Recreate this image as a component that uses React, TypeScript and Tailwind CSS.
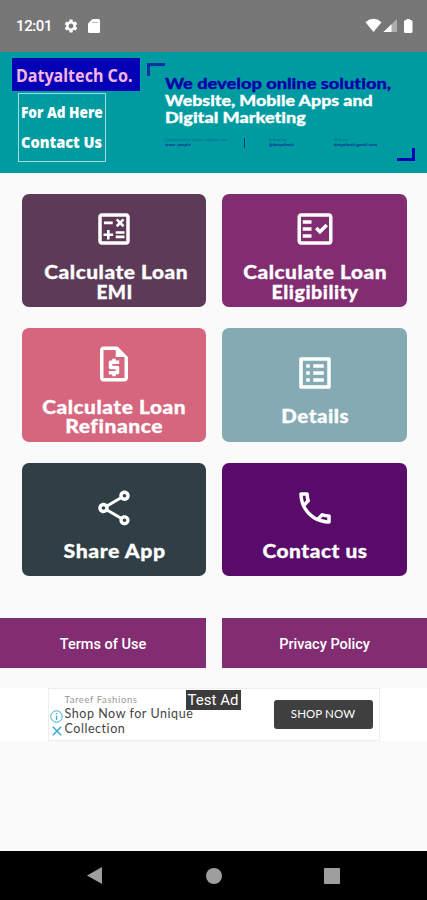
import type { ReactNode } from "react";
import clsx from "clsx";
import type { IconType } from "react-icons";
import {
  MdOutlineCalculate,
  MdOutlineCall,
  MdOutlineFactCheck,
  MdOutlineListAlt,
  MdOutlineRequestQuote,
  MdOutlineShare,
  MdSettings,
} from "react-icons/md";

type Tile = {
  lines: { text: string; className: string }[];
  icon: IconType;
  color: string;
};

const TILES: Tile[] = [
  {
    lines: [
      { text: "Calculate Loan", className: "scale-x-[1.07]" },
      { text: "EMI", className: "scale-x-[0.98] pr-1" },
    ],
    icon: MdOutlineCalculate,
    color: "bg-[#5d3b58]",
  },
  {
    lines: [
      { text: "Calculate Loan", className: "scale-x-[1.07] pr-1" },
      { text: "Eligibility", className: "scale-x-[1.01] pr-1" },
    ],
    icon: MdOutlineFactCheck,
    color: "bg-[#822c71]",
  },
  {
    lines: [
      { text: "Calculate Loan", className: "scale-x-[1.07] pr-1" },
      { text: "Refinance", className: "scale-x-[1.08] pr-1" },
    ],
    icon: MdOutlineRequestQuote,
    color: "bg-[#d5667e]",
  },
  {
    lines: [{ text: "Details", className: "scale-x-[1.05] pr-1" }],
    icon: MdOutlineListAlt,
    color: "bg-[#84abb4]",
  },
  {
    lines: [{ text: "Share App", className: "scale-x-[1.09] pr-1" }],
    icon: MdOutlineShare,
    color: "bg-[#2f3f45]",
  },
  {
    lines: [{ text: "Contact us", className: "scale-x-[1.07] pr-1" }],
    icon: MdOutlineCall,
    color: "bg-[#590b69]",
  },
];

function StatusBar() {
  return (
    <header className="flex h-[52px] items-center bg-[#777777] pl-4 text-white">
      <span className="w-[47px] pt-px font-['Roboto'] text-[15px] font-medium tracking-[-0.4px]">
        12:01
      </span>
      <MdSettings size={16} />
      <svg className="ml-[9px]" width="12" height="14" viewBox="0 0 12 14">
        <path
          d="M4.5 0H10.5Q12 0 12 1.5V12.5Q12 14 10.5 14H1.5Q0 14 0 12.5V4.5Z"
          fill="currentColor"
        />
        <path d="M4 3.5H10" stroke="#777777" strokeWidth="1" opacity=".5" />
      </svg>
      <svg
        className="mr-[13px] ml-auto"
        width="49"
        height="16"
        viewBox="0 0 49 16"
        fill="currentColor"
      >
        <path d="M0.5 4.2Q8.5-2.5 16.5 4.2L8.5 14Z" />
        <path d="M32 1V14H18.500Z" opacity=".4" />
        <path d="M26.500 6.300V14H18.500Z" />
        <path d="M41.500 1H45V2H46Q47.500 2 47.500 3.500V13.500Q47.500 15 46 15H40.500Q39 15 39 13.500V3.500Q39 2 40.500 2H41.500Z" />
      </svg>
    </header>
  );
}

function BannerNote({ top, bottom, className }: { top: string; bottom: string; className: string }) {
  return (
    <div className={clsx("text-[4px] leading-[4.5px] whitespace-nowrap", className)}>
      <div className="opacity-70">{top}</div>
      <div className="font-bold">{bottom}</div>
    </div>
  );
}

function Banner() {
  return (
    <section className="relative flex h-[121px] bg-[#009ba1]">
      <div className="ml-3 w-[135px] pt-[6px]">
        <div className="flex h-[33px] w-[128px] items-center bg-[#0301b5] pl-1">
          <span className="origin-left scale-x-[0.87] font-['Noto_Sans'] text-[18.5px] font-bold whitespace-nowrap text-[#f6b4e2]">
            Datyaltech Co.
          </span>
        </div>
        <div className="mt-[2px] ml-[6px] flex h-[69px] w-[88px] flex-col border border-[#9fdcde] pt-[3px] pl-[2px] font-['Open_Sans'] text-[16px] leading-[30px] font-extrabold whitespace-nowrap text-white">
          <span className="origin-left scale-x-[0.85]">For Ad Here</span>
          <span className="origin-left scale-x-[0.91]">Contact Us</span>
        </div>
      </div>
      <div className="mt-[11px] h-[13px] w-[18px] border-t-[3px] border-l-[3px] border-[#0a30a8]" />
      <div className="pt-[22.500px] font-['Lato'] text-[15.500px] leading-[17px] font-black whitespace-nowrap text-white [font-variant-ligatures:none]">
        <p className="w-fit origin-left scale-x-[1.175] text-[#0301a8] [-webkit-text-stroke:0.3px]">
          We develop online solution,
        </p>
        <p className="w-fit origin-left scale-x-[1.145] [-webkit-text-stroke:0.3px]">
          Website, Mobile Apps and
        </p>
        <p className="w-fit origin-left scale-x-[1.165] [-webkit-text-stroke:0.3px]">
          Digital Marketing
        </p>
        <div className="mt-[12.500px] flex font-['Open_Sans'] font-normal text-[#0a309c]">
          <BannerNote top="Committed to smart solutions for" bottom="www. people" className="w-[79px]" />
          <div className="h-[10px] w-[25px] border-l border-[#0a309c]" />
          <BannerNote top="follow us:" bottom="@datyaltech" className="w-[65px]" />
          <BannerNote top="Visit us:" bottom="datyaltech.gmail.com" className="w-[50px]" />
        </div>
      </div>
      <div className="absolute right-[12px] bottom-[12px] h-[13px] w-[18px] border-r-[3px] border-b-[3px] border-[#0301b5]" />
    </section>
  );
}

function TileCard({ tile }: { tile: Tile }) {
  const Icon = tile.icon;
  return (
    <button
      type="button"
      className={clsx(
        "flex h-[113.500px] flex-col items-center rounded-[7px] text-white",
        tile.lines.length > 1 ? "pt-[14.500px]" : "pt-[24px]",
        tile.color,
      )}
    >
      <Icon size={42} className="shrink-0" />
      <span className="mt-[12px] flex flex-col items-center pl-[5px] font-['Lato'] text-[19.500px] leading-[19.500px] font-black tracking-[0.5px] whitespace-nowrap [-webkit-text-stroke:0.3px]">
        {tile.lines.map((line) => (
          <span key={line.text} className={line.className}>
            {line.text}
          </span>
        ))}
      </span>
    </button>
  );
}

function PolicyButton({ children }: { children: ReactNode }) {
  return (
    <button
      type="button"
      className="h-[50px] bg-[#822c71] pt-[3px] font-['Roboto'] text-[14.500px] font-medium text-white"
    >
      {children}
    </button>
  );
}

function AdBanner() {
  return (
    <section className="mt-5 flex h-[53px] justify-center bg-white">
      <div className="relative flex w-[332px] border border-[#eeeeee]">
        <div className="flex w-[15px] flex-col items-center gap-[3px] pt-[21px] pl-px">
          <svg width="13" height="13" viewBox="0 0 13 13" fill="none" stroke="#35aed0">
            <circle cx="6.500" cy="6.500" r="5.700" />
            <path d="M6.500 5.500V10M6.500 3V4.300" strokeWidth="1.300" />
          </svg>
          <svg width="10" height="10" viewBox="0 0 10 10" fill="none" stroke="#35aed0" strokeWidth="1.500">
            <path d="M.8 .8 9.200 9.200M9.200 .8 .8 9.200" />
          </svg>
        </div>
        <div className="pt-[4px] pl-px font-['Lato'] text-[#444444]">
          <p className="text-[9.500px] leading-[14px] tracking-[0.6px] text-[#999999]">
            Tareef Fashions
          </p>
          <p className="text-[12.500px] leading-[14.500px] tracking-[0.55px] whitespace-nowrap">
            Shop Now for Unique
            <br />
            Collection
          </p>
        </div>
        <span className="absolute top-[1px] left-[137px] flex h-[20px] w-[55px] items-center justify-center bg-[#3c3c3c] font-['Roboto'] text-[15px] whitespace-nowrap text-white">
          Test Ad
        </span>
        <button
          type="button"
          className="mt-[11px] mr-[6px] ml-auto h-[29px] w-[99px] rounded-[3px] bg-[#3f3f3f] pb-[2px] font-['Lato'] text-[11.500px] tracking-[0.1px] text-white"
        >
          SHOP NOW
        </button>
      </div>
    </section>
  );
}

function NavigationBar() {
  return (
    <nav className="mt-auto flex h-[49px] items-center bg-black text-[#9e9e9e]">
      <svg className="ml-[87px]" width="15" height="17" viewBox="0 0 15 17" fill="currentColor">
        <path d="M15 0V17L0 8.500Z" />
      </svg>
      <div className="ml-[104px] size-[16px] rounded-full bg-current" />
      <div className="ml-[102px] size-[16px] rounded-[1px] bg-current" />
    </nav>
  );
}

export default function App() {
  return (
    <div className="flex h-[900px] w-[427px] flex-col overflow-hidden bg-[#fafafa]">
      <StatusBar />
      <Banner />
      <main>
        <div className="grid grid-cols-2 gap-x-4 gap-y-[21px] pt-[20.500px] pr-5 pl-[21.500px]">
          {TILES.map((tile) => (
            <TileCard key={tile.lines[0].text + tile.color} tile={tile} />
          ))}
        </div>
        <div className="mt-[42px] grid grid-cols-[206px_205px] gap-4">
          <PolicyButton>Terms of Use</PolicyButton>
          <PolicyButton>Privacy Policy</PolicyButton>
        </div>
        <AdBanner />
      </main>
      <NavigationBar />
    </div>
  );
}
